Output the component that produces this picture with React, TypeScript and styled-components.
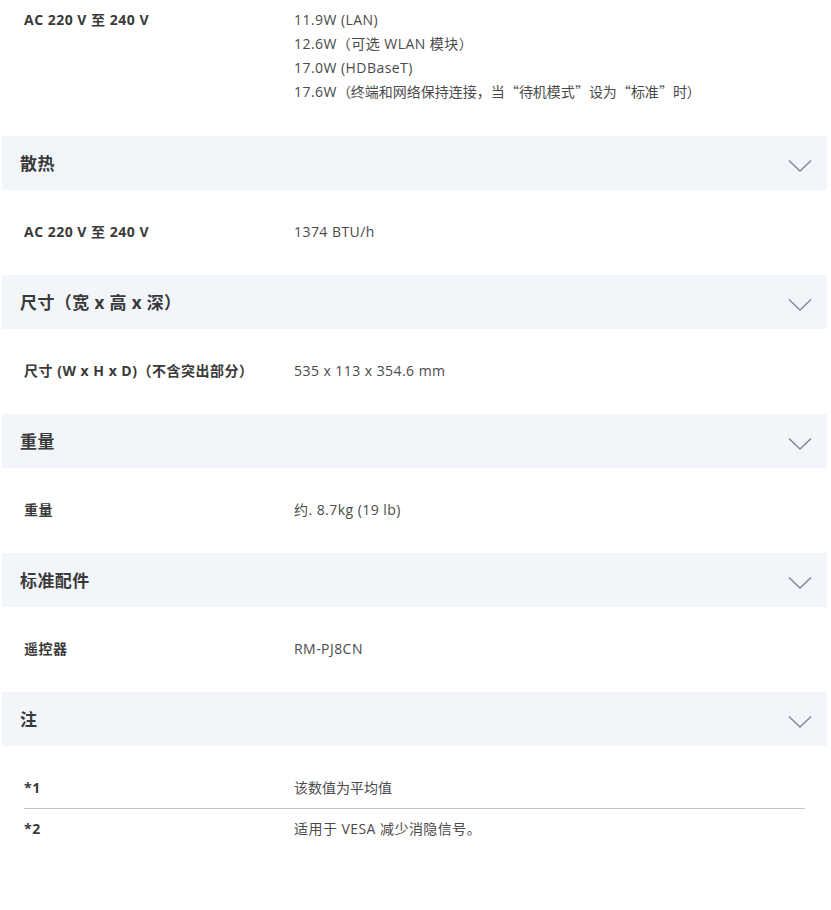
import React from 'react';
import styled, { createGlobalStyle } from 'styled-components';

const GlobalStyle = createGlobalStyle`
	body {
		margin: 0;
		background: #fff;
		font-family: 'Open Sans', 'Noto Sans CJK SC', sans-serif;
		color: #333;
	}
`;

const Page = styled.div`
	width: 825px;
	padding: 0 4px 40px 2px;
`;

const SectionHeader = styled.div`
	height: 54px;
	display: flex;
	align-items: center;
	justify-content: space-between;
	padding: 2px 15px 0 18px;
	box-sizing: border-box;
	background-color: #f2f5fa;
`;

const SectionTitle = styled.h3`
	margin: 0;
	font-size: 17px;
	font-weight: 700;
	color: #3a3a3a;
	line-height: 24px;
	letter-spacing: 0.4px;
`;

const Chevron = styled.svg`
	width: 24px;
	height: 14px;
	margin-top: 3px;
`;

const Body = styled.div<{ $top?: number; $bottom?: number }>`
	padding: ${(p) => p.$top ?? 30}px 22px ${(p) => p.$bottom ?? 31}px;
`;

const Row = styled.div<{ $divided?: boolean; $pad?: string }>`
	display: grid;
	grid-template-columns: 270px 1fr;
	padding: ${(p) => p.$pad ?? '0'};
	border-bottom: ${(p) => (p.$divided ? '1px solid #c4c4c4' : 'none')};
`;

const Label = styled.div`
	font-size: 14px;
	font-weight: 700;
	line-height: 24px;
	letter-spacing: 0.5px;
	color: #3a3a3a;
`;

const Values = styled.div`
	font-size: 14px;
	line-height: 24px;
	letter-spacing: 0.45px;
	color: #4a4a4a;
`;

const Line = styled.div`
	height: 24px;
	white-space: nowrap;
`;

const Cjk = styled.span`
	letter-spacing: 0;
`;

const Quote = styled.span`
	font-family: 'Noto Sans CJK SC', sans-serif;
	line-height: 1;
`;

const ChevronIcon = () => (
	<Chevron viewBox="0 0 24 14" fill="none">
		<path d="M1 1.5 L12 12 L23 1.5" stroke="#7d8794" strokeWidth="1.4" />
	</Chevron>
);

const Section = ({ title, children }: { title: string; children: React.ReactNode }) => (
	<>
		<SectionHeader>
			<SectionTitle>{title}</SectionTitle>
			<ChevronIcon />
		</SectionHeader>
		{children}
	</>
);

const App = () => {
	return (
		<Page>
			<GlobalStyle />
			<Body $top={8} $bottom={32}>
				<Row>
					<Label>AC 220 V 至 240 V</Label>
					<Values>
						<Line>11.9W (LAN)</Line>
						<Line>12.6W（可选 WLAN 模块）</Line>
						<Line>17.0W (HDBaseT)</Line>
						<Line>
							17.6W
							<Cjk>
								（终端和网络保持连接，当<Quote>“</Quote>待机模式<Quote>”</Quote>设为<Quote>“</Quote>标准
								<Quote>”</Quote>时）
							</Cjk>
						</Line>
					</Values>
				</Row>
			</Body>

			<Section title="散热">
				<Body>
					<Row>
						<Label>AC 220 V 至 240 V</Label>
						<Values>1374 BTU/h</Values>
					</Row>
				</Body>
			</Section>

			<Section title="尺寸（宽 x 高 x 深）">
				<Body>
					<Row>
						<Label>尺寸 (W x H x D)（不含突出部分）</Label>
						<Values>535 x 113 x 354.6 mm</Values>
					</Row>
				</Body>
			</Section>

			<Section title="重量">
				<Body>
					<Row>
						<Label>重量</Label>
						<Values>约. 8.7kg (19 lb)</Values>
					</Row>
				</Body>
			</Section>

			<Section title="标准配件">
				<Body>
					<Row>
						<Label>遥控器</Label>
						<Values>RM-PJ8CN</Values>
					</Row>
				</Body>
			</Section>

			<Section title="注">
				<Body $bottom={20}>
					<Row $divided $pad="0 0 8px">
						<Label>*1</Label>
						<Values>
							<Cjk>该数值为平均值</Cjk>
						</Values>
					</Row>
					<Row $pad="8px 0 0">
						<Label>*2</Label>
						<Values>适用于 VESA 减少消隐信号。</Values>
					</Row>
				</Body>
			</Section>
		</Page>
	);
};

export default App;
